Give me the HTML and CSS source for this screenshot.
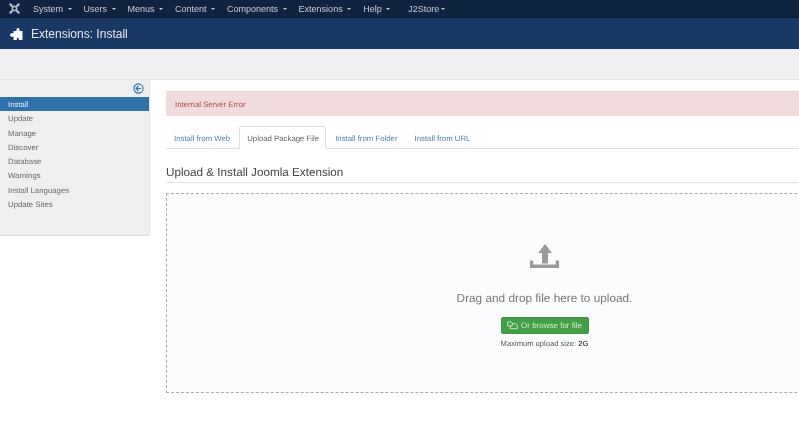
FILE: index.html
```html
<!DOCTYPE html>
<html lang="en">
<head>
<meta charset="utf-8">
<title>Extensions: Install</title>
<link rel="stylesheet" href="styles.css">
</head>
<body>
<nav class="navbar">
  <svg class="joomla" viewBox="0 0 12 12"><path d="M1.500 1.500l2.600 2.600M10.500 1.500L7.900 4.100M1.500 10.500l2.600-2.600M10.500 10.500L7.900 7.900" fill="none" stroke="#b4bbc6" stroke-width="2.400" stroke-linecap="round"/><path d="M6 3.200L8.800 6 6 8.800 3.200 6z" fill="none" stroke="#b4bbc6" stroke-width="1.200"/></svg>
  <ul class="menu">
    <li class="menu-item">System <i class="caret"></i></li>
    <li class="menu-item">Users <i class="caret"></i></li>
    <li class="menu-item">Menus <i class="caret"></i></li>
    <li class="menu-item">Content <i class="caret"></i></li>
    <li class="menu-item">Components <i class="caret"></i></li>
    <li class="menu-item">Extensions <i class="caret"></i></li>
    <li class="menu-item">Help <i class="caret"></i></li>
    <li class="menu-item store">J2Store<i class="caret"></i></li>
  </ul>
</nav>
<header class="titlebar">
  <svg class="puzzle" viewBox="0 0 13 12"><path d="M3.500 3H6.500V1.500A1.500 1.500 0 0 1 9.500 1.500V3H12.500V12H8.800V10.800A1 1 0 0 0 6.800 10.800V12H3.500V8.800H1.800A1.800 1.800 0 0 1 1.800 5.200H3.500Z" fill="#fff"/></svg>
  <h1 class="page-title">Extensions: Install</h1>
</header>
<div class="toolbar"></div>
<div class="layout">
  <aside class="sidebar">
    <div class="collapse-row">
      <svg class="collapse-icon" viewBox="0 0 12 12"><circle cx="6" cy="6" r="5" fill="none" stroke="#2f74ad" stroke-width="1.200"/><path d="M6 3.300L3.300 6 6 8.700M3.500 6h5.300" fill="none" stroke="#2f74ad" stroke-width="1.300"/></svg>
    </div>
    <ul class="side-nav">
      <li class="side-item active">Install</li>
      <li class="side-item">Update</li>
      <li class="side-item">Manage</li>
      <li class="side-item">Discover</li>
      <li class="side-item">Database</li>
      <li class="side-item">Warnings</li>
      <li class="side-item">Install Languages</li>
      <li class="side-item">Update Sites</li>
    </ul>
  </aside>
  <main class="content">
    <div class="alert"><span class="soft">Internal Server Error</span></div>
    <ul class="tabs">
      <li class="tab"><span class="soft">Install from Web</span></li>
      <li class="tab current"><span class="soft">Upload Package File</span></li>
      <li class="tab"><span class="soft">Install from Folder</span></li>
      <li class="tab tab-last"><span class="soft">Install from URL</span></li>
    </ul>
    <h2 class="section-title"><span class="soft">Upload &amp; Install Joomla Extension</span></h2>
    <section class="dropzone">
      <svg class="upload-icon" viewBox="0 0 29 24"><path d="M15 0L22 9H18V19.500H12V9H8ZM0 16.500H3.300V20.500H25.700V16.500H29V24H0Z" fill="#9a9a9a"/></svg>
      <p class="drop-text soft">Drag and drop file here to upload.</p>
      <button class="browse" type="button">
        <svg class="copy-icon" viewBox="0 0 12 10"><path d="M.7 1h4l1 1.500v3H.7zM3.500 5.500v3h7.800V4.500L9.800 3H5.700" fill="none" stroke="#e4f2e4" stroke-width=".9"/></svg>
        <span class="soft">Or browse for file</span>
      </button>
      <p class="max-size soft">Maximum upload size: <strong>2G</strong></p>
    </section>
  </main>
</div>
</body>
</html>
```
FILE: styles.css
```css
* { box-sizing: border-box; }
html, body { margin: 0; padding: 0; }
body {
  width: 799px;
  height: 431px;
  overflow: hidden;
  background: #fff;
  font-family: "Liberation Sans", Arial, sans-serif;
  color: #444;
}
ul { list-style: none; margin: 0; padding: 0; }

.soft {
  display: inline-block;
  filter: blur(.3px);
  text-rendering: geometricPrecision;
}

.navbar {
  height: 18px;
  background: #10233f;
  border-bottom: 1px solid #0c1b33;
  display: flex;
  align-items: center;
  padding-left: 9px;
}
.joomla { width: 11px; height: 11px; margin-right: 13px; }
.menu { display: flex; color: #c8ced7; font-size: 9px; filter: blur(.3px); }
.menu-item { margin-right: 12px; white-space: nowrap; }
.menu-item.store { margin-left: 6px; }
.caret {
  display: inline-block;
  width: 0;
  height: 0;
  margin-left: 2px;
  vertical-align: middle;
  border-top: 2px solid #c8ced7;
  border-left: 2px solid transparent;
  border-right: 2px solid transparent;
}

.titlebar {
  height: 31px;
  background: #193864;
  display: flex;
  align-items: center;
  padding-left: 10px;
}
.puzzle { width: 13px; height: 12px; margin-right: 8px; }
.page-title { margin: 0; font-size: 12px; font-weight: 400; color: #e6e9ee; filter: blur(.3px); }

.toolbar {
  height: 31px;
  background: #efefef;
  border-bottom: 1px solid #e2e2e2;
}

.layout { display: flex; align-items: flex-start; }
.sidebar {
  width: 150px;
  height: 156px;
  flex: none;
  background: #efefef;
  border-bottom: 1px solid #dcdcdc;
  border-right: 1px solid #e6e6e6;
  border-bottom-right-radius: 2px;
}
.collapse-row {
  height: 17px;
  display: flex;
  justify-content: flex-end;
  align-items: center;
  padding-right: 5px;
}
.collapse-icon { width: 11px; height: 11px; }
.side-nav { filter: blur(.25px); }
.side-item {
  height: 14.300px;
  line-height: 15.500px;
  padding-left: 8px;
  font-size: 7.800px;
  color: #666;
  text-rendering: geometricPrecision;
}
.side-item.active { background: #2f72a9; color: #e8eff6; }

.content { flex: 1; min-width: 0; margin-left: 16px; padding-top: 11px; overflow: hidden; height: 351px; }
.alert {
  height: 25px;
  line-height: 28px;
  padding-left: 9px;
  background: #f2dbdd;
  color: #b0454a;
  font-size: 7.800px;
}
.tabs {
  display: flex;
  margin-top: 10px;
  height: 23px;
  border-bottom: 1px solid #e0e0e0;
  font-size: 7.800px;
  color: #4a82b5;
}
.tab { padding: 0 8px; line-height: 25px; white-space: nowrap; }
.tab-last { margin-left: 1px; }
.tab.current {
  height: 23px;
  margin-left: 1px;
  margin-right: 1px;
  padding: 0 6px 0 7px;
  background: #fff;
  color: #666;
  border: 1px solid #e0e0e0;
  border-bottom-color: #fff;
  border-radius: 2px 2px 0 0;
  line-height: 23px;
}
.section-title {
  margin: 0;
  height: 34px;
  line-height: 45px;
  font-size: 11.700px;
  font-weight: 400;
  color: #444;
  border-bottom: 1px solid #e4e4e4;
}
.dropzone {
  margin-top: 10px;
  height: 200px;
  width: 756px;
  background: #fbfcfe;
  border: 1px dashed #aaa;
  border-right: 0;
  display: flex;
  flex-direction: column;
  align-items: center;
  padding-top: 50px;
}
.upload-icon { width: 29px; height: 24px; flex: none; }
.drop-text { margin: 23px 0 0; font-size: 11.800px; line-height: 14px; color: #777; }
.browse {
  margin-top: 12px;
  width: 88px;
  height: 17px;
  flex: none;
  padding: 0;
  background: #43a047;
  border: 1px solid #3d963f;
  border-radius: 2px;
  color: #d8ecd8;
  font-family: inherit;
  font-size: 8px;
  display: flex;
  align-items: center;
  justify-content: center;
  gap: 3px;
}
.copy-icon { width: 11px; height: 9px; }
.max-size { margin: 4px 0 0; font-size: 7.600px; line-height: 11px; color: #555; }
```
